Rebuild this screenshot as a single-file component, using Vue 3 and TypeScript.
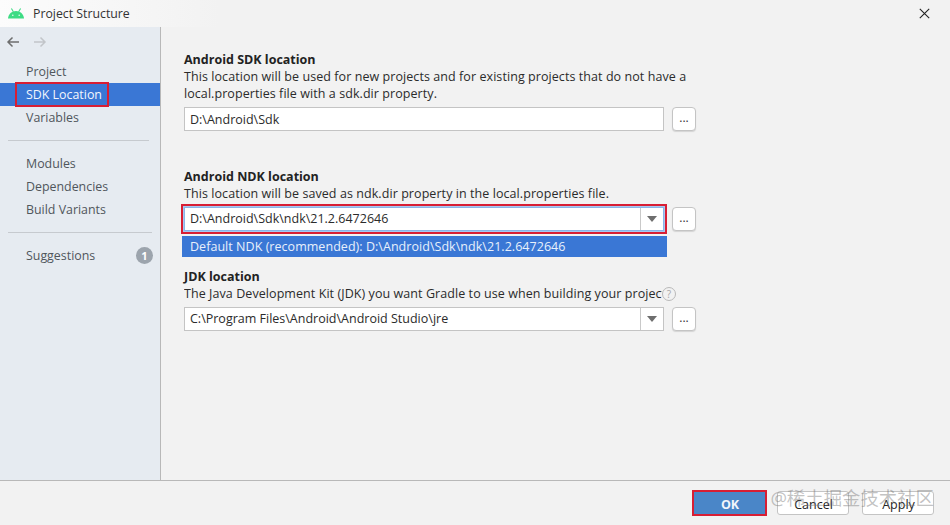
<script setup lang="ts">
const groups: { label: string; active?: boolean; badge?: number }[][] = [
  [{ label: 'Project' }, { label: 'SDK Location', active: true }, { label: 'Variables' }],
  [{ label: 'Modules' }, { label: 'Dependencies' }, { label: 'Build Variants' }],
  [{ label: 'Suggestions', badge: 1 }],
]
</script>

<template>
  <div class="dialog">
    <header class="titlebar">
      <svg class="logo" width="16" height="11" viewBox="0 0 16 11">
        <path d="M0 10.500C.3 6 3.800 3 8 3s7.700 3 8 7.500z" fill="#3ddc84" />
        <path d="M3.400.5l2 3.200M12.600.5l-2 3.200" stroke="#3ddc84" stroke-width="1.100" fill="none" />
        <circle cx="4.800" cy="7.200" r=".8" fill="#eafbf1" />
        <circle cx="11.200" cy="7.200" r=".8" fill="#eafbf1" />
      </svg>
      <span class="title">Project Structure</span>
      <svg class="close" width="11" height="11" viewBox="0 0 11 11">
        <path d="M.8.8l9.400 9.400M10.200.8L.8 10.200" stroke="#222" stroke-width="1.100" fill="none" />
      </svg>
    </header>

    <div class="main">
      <aside class="sidebar">
        <div class="nav-arrows">
          <svg width="14" height="12" viewBox="0 0 14 12">
            <path d="M13 6H2M6.500 1.500L2 6l4.500 4.500" stroke="#6e6e6e" stroke-width="1.500" fill="none" />
          </svg>
          <svg width="14" height="12" viewBox="0 0 14 12">
            <path d="M1 6h11M7.500 1.500L12 6l-4.500 4.500" stroke="#c2c5c9" stroke-width="1.500" fill="none" />
          </svg>
        </div>
        <template v-for="(group, i) in groups" :key="i">
          <hr v-if="i > 0" class="sep" :class="{ long: i === 2 }" />
          <ul class="group">
            <li v-for="item in group" :key="item.label" class="item" :class="{ active: item.active }">
              <span class="item-label">{{ item.label }}</span>
              <span v-if="item.badge" class="badge">{{ item.badge }}</span>
            </li>
          </ul>
        </template>
      </aside>

      <section class="content">
        <div class="block first">
          <h3>Android SDK location</h3>
          <p>This location will be used for new projects and for existing projects that do not have a<br />local.properties file with a sdk.dir property.</p>
          <div class="row">
            <div class="field">D:\Android\Sdk</div>
            <button class="dots">...</button>
          </div>
        </div>

        <div class="block second">
          <h3>Android NDK location</h3>
          <p>This location will be saved as ndk.dir property in the local.properties file.</p>
          <div class="row">
            <div class="field combo focused">
              <span class="value">D:\Android\Sdk\ndk\21.2.6472646</span>
              <span class="arrow"><i></i></span>
            </div>
            <button class="dots">...</button>
            <div class="popup">Default NDK (recommended): D:\Android\Sdk\ndk\21.2.6472646</div>
          </div>
        </div>

        <div class="block third">
          <h3>JDK location</h3>
          <div class="clip-row">
            <p class="clip">The Java Development Kit (JDK) you want Gradle to use when building your project</p>
            <span class="help">?</span>
          </div>
          <div class="row">
            <div class="field combo">
              <span class="value">C:\Program Files\Android\Android Studio\jre</span>
              <span class="arrow"><i></i></span>
            </div>
            <button class="dots">...</button>
          </div>
        </div>
      </section>
    </div>

    <footer class="footer">
      <button class="btn ok">OK</button>
      <button class="btn cancel">Cancel</button>
      <button class="btn">Apply</button>
      <span class="watermark">@稀土掘金技术社区</span>
    </footer>
  </div>
</template>

<style>
html, body { margin: 0; background: #f2f2f2; }
</style>

<style scoped>
.dialog {
  width: 950px;
  height: 525px;
  display: flex;
  flex-direction: column;
  background: #f2f2f2;
  color: #2b2b2b;
  font-family: "Open Sans", "Noto Sans", "Noto Sans CJK SC", sans-serif;
  font-size: 12.5px;
  overflow: hidden;
}
.titlebar {
  height: 27px;
  flex: none;
  display: flex;
  align-items: center;
  padding: 0 20px 0 8px;
  background: linear-gradient(to right, #fcfcfc, #f2f2f2 220px);
}
.logo { margin-right: 9px; }
.title { flex: 1; font-size: 12.3px; color: #333; }
.main { flex: 1; display: flex; min-height: 0; }
.sidebar {
  width: 160px;
  flex: none;
  background: #e6ebf1;
  border-right: 1px solid #b8b8b8;
}
.nav-arrows {
  height: 29px;
  display: flex;
  align-items: center;
  gap: 13px;
  padding-left: 6px;
}
.group { list-style: none; margin: 0; padding: 4px 0 11px; }
.sep {
  margin: 0 11px 0 8px;
  height: 1px;
  border: 0;
  background: #c6cacf;
}
.sep.long { margin-right: 8px; }
.group:not(:first-of-type) { padding: 11px 0 11px; }
.item {
  height: 23px;
  display: flex;
  align-items: center;
  justify-content: space-between;
  padding: 0 7px 0 26px;
  color: #50565c;
  font-size: 12.4px;
}
.item.active { background: #3a77d5; color: #f2f6fc; position: relative; }
.item.active::after {
  content: "";
  position: absolute;
  left: 15px;
  right: 51px;
  top: -1px;
  bottom: -1px;
  border: 2px solid #d81e34;
  pointer-events: none;
}
.badge {
  width: 17px;
  height: 17px;
  border-radius: 50%;
  background: #9ca4ad;
  color: #fff;
  font-size: 11px;
  font-weight: 700;
  display: flex;
  align-items: center;
  justify-content: center;
}
.content { flex: 1; padding-left: 23px; }
.block { width: 513px; }
.first { margin-top: 24px; }
.second { margin-top: 37px; }
.third { margin-top: 37px; }
h3 { margin: 0; font-size: 12.5px; line-height: 17px; font-weight: 700; color: #222; }
p { margin: 0; line-height: 17px; color: #2b2b2b; white-space: nowrap; letter-spacing: 0.07px; }
.row {
  position: relative;
  display: flex;
  gap: 8px;
  margin-top: 5px;
}
.field {
  width: 480px;
  height: 24px;
  box-sizing: border-box;
  border: 1px solid #c4c4c4;
  background: #fff;
  padding-left: 5px;
  display: flex;
  align-items: center;
  color: #2b2b2b;
}
.combo { padding-left: 0; }
.value { flex: 1; padding: 0 0 2px 5px; }
.arrow {
  width: 22px;
  height: 100%;
  border-left: 1px solid #c9c9c9;
  display: flex;
  align-items: center;
  justify-content: center;
}
.arrow i {
  width: 0;
  height: 0;
  border-left: 5px solid transparent;
  border-right: 5px solid transparent;
  border-top: 6px solid #6e6e6e;
}
.focused {
  border-color: #8ab4e8;
  box-shadow: 0 0 0 1px #a9c8ee, 0 0 0 3px #d81e34;
}
.dots {
  width: 24px;
  height: 24px;
  box-sizing: border-box;
  border: 1px solid #c4c4c4;
  border-radius: 4px;
  background: #fff;
  padding: 0 0 3px;
  font: inherit;
  font-size: 12px;
  color: #333;
  box-shadow: 0 1px 1px #d4d4d4;
}
.popup {
  position: absolute;
  left: -2px;
  top: 29px;
  width: 485px;
  height: 21px;
  box-sizing: border-box;
  padding-left: 8px;
  display: flex;
  align-items: center;
  background: #3a77d5;
  color: #e8f0fb;
  white-space: nowrap;
  letter-spacing: 0.04px;
}
.clip-row { display: flex; align-items: center; }
.clip { width: 478px; overflow: hidden; }
.help {
  width: 12px;
  height: 12px;
  border: 1px solid #b9b9b9;
  border-radius: 50%;
  color: #a8a8a8;
  font-size: 10px;
  line-height: 12px;
  text-align: center;
}
.footer {
  position: relative;
  height: 44px;
  flex: none;
  border-top: 1px solid #b8b8b8;
  display: flex;
  justify-content: flex-end;
  align-items: center;
  gap: 13px;
  padding-right: 16px;
}
.btn {
  width: 72px;
  height: 24px;
  box-sizing: border-box;
  border: 1px solid #c4c4c4;
  border-radius: 3px;
  background: #fff;
  font: inherit;
  color: #222;
  padding: 3px 0 0 1px;
}
.ok {
  width: 75px;
  height: 26px;
  margin-right: -3px;
  border: 2px solid #d81e34;
  border-radius: 0;
  background: #4a86c8;
  color: #f2f6fb;
  font-weight: 700;
}
.watermark {
  position: absolute;
  right: 16px;
  top: 5px;
  font-size: 18.4px;
  line-height: 24px;
  color: rgba(120, 120, 120, 0.45);
  white-space: nowrap;
  pointer-events: none;
}
</style>
